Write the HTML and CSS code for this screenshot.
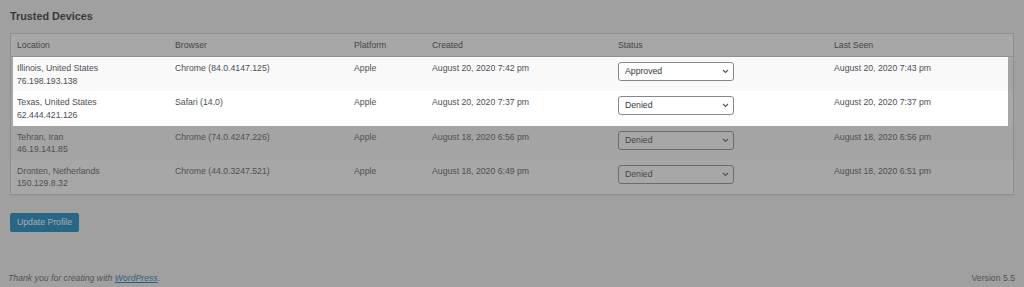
FILE: index.html
```html
<!DOCTYPE html>
<html lang="en">
<head>
    <meta charset="UTF-8">
    <meta name="viewport" content="width=device-width, initial-scale=1.0">
    <title>Profile - Trusted Devices</title>
    <link rel="stylesheet" href="styles.css">
</head>
<body>
    <div class="wrap">
        <h2 class="section-title">Trusted Devices</h2>

        <div class="devices">
            <div class="devices-row devices-head">
                <div>Location</div>
                <div>Browser</div>
                <div>Platform</div>
                <div>Created</div>
                <div>Status</div>
                <div>Last Seen</div>
            </div>

            <!-- rows picked out by the tour -->
            <div class="devices-focus">
                <div class="devices-row alt">
                    <div>Illinois, United States<br>76.198.193.138</div>
                    <div>Chrome (84.0.4147.125)</div>
                    <div>Apple</div>
                    <div>August 20, 2020 7:42 pm</div>
                    <div>
                        <span class="select-wrap">
                            <select>
                                <option selected>Approved</option>
                                <option>Denied</option>
                            </select>
                            <svg class="chevron" width="7" height="5" viewBox="0 0 7 5"><path d="M1 1l2.5 2.5L6 1" fill="none" stroke="#555" stroke-width="1.1"/></svg>
                        </span>
                    </div>
                    <div>August 20, 2020 7:43 pm</div>
                </div>
                <div class="devices-row">
                    <div>Texas, United States<br>62.444.421.126</div>
                    <div>Safari (14.0)</div>
                    <div>Apple</div>
                    <div>August 20, 2020 7:37 pm</div>
                    <div>
                        <span class="select-wrap">
                            <select>
                                <option>Approved</option>
                                <option selected>Denied</option>
                            </select>
                            <svg class="chevron" width="7" height="5" viewBox="0 0 7 5"><path d="M1 1l2.5 2.5L6 1" fill="none" stroke="#555" stroke-width="1.1"/></svg>
                        </span>
                    </div>
                    <div>August 20, 2020 7:37 pm</div>
                </div>
            </div>

            <div class="devices-row alt">
                <div>Tehran, Iran<br>46.19.141.85</div>
                <div>Chrome (74.0.4247.226)</div>
                <div>Apple</div>
                <div>August 18, 2020 6:56 pm</div>
                <div>
                    <span class="select-wrap">
                        <select>
                            <option>Approved</option>
                            <option selected>Denied</option>
                        </select>
                        <svg class="chevron" width="7" height="5" viewBox="0 0 7 5"><path d="M1 1l2.5 2.5L6 1" fill="none" stroke="#555" stroke-width="1.1"/></svg>
                    </span>
                </div>
                <div>August 18, 2020 6:56 pm</div>
            </div>
            <div class="devices-row">
                <div>Dronten, Netherlands<br>150.129.8.32</div>
                <div>Chrome (44.0.3247.521)</div>
                <div>Apple</div>
                <div>August 18, 2020 6:49 pm</div>
                <div>
                    <span class="select-wrap">
                        <select>
                            <option>Approved</option>
                            <option selected>Denied</option>
                        </select>
                        <svg class="chevron" width="7" height="5" viewBox="0 0 7 5"><path d="M1 1l2.5 2.5L6 1" fill="none" stroke="#555" stroke-width="1.1"/></svg>
                    </span>
                </div>
                <div>August 18, 2020 6:51 pm</div>
            </div>
        </div>

        <p class="submit">
            <button class="button-primary">Update Profile</button>
        </p>
    </div>

    <footer class="footer">
        <p class="thanks">Thank you for creating with <a href="#">WordPress</a>.</p>
        <p class="version">Version 5.5</p>
    </footer>
</body>
</html>
```

FILE: styles.css
```css
body {
    margin: 0;
    min-height: 100vh;
    background: #f1f1f1;
    color: #444;
    font-family: 'Liberation Sans', Arial, sans-serif;
    font-size: 8.7px;
}

.wrap {
    padding: 0 10px;
}

.section-title {
    margin: 9px 0 10px;
    font-size: 10.8px;
    line-height: 14px;
    font-weight: bold;
    color: #1d2327;
}

.devices {
    background: #fff;
    border: 1px solid #ccd0d4;
    box-shadow: 0 1px 1px rgba(0, 0, 0, 0.04);
}

.devices-row {
    display: grid;
    grid-template-columns: 158px 179px 78px 186px 216px 1fr;
    background: #fff;
    color: #4a4f55;
}

.devices-row > div {
    padding: 5px 6px 4.3px;
    line-height: 12.5px;
}

.devices-row.alt {
    background: #f9f9f9;
}

.devices-head {
    border-bottom: 1px solid #ccd0d4;
    color: #32373c;
}

.devices-head > div {
    padding: 5px 6px;
    line-height: 12px;
}

/* spotlight: everything outside this box gets dimmed */
.devices-focus {
    position: relative;
}

.devices-focus::after {
    content: "";
    position: absolute;
    top: 0;
    bottom: 0;
    left: 2px;
    right: 5px;
    box-shadow: 0 0 0 3000px rgba(80, 80, 80, 0.5);
    pointer-events: none;
    z-index: 5;
}

.select-wrap {
    position: relative;
    display: inline-block;
}

.select-wrap select {
    appearance: none;
    -webkit-appearance: none;
    display: block;
    width: 116px;
    height: 19px;
    margin: 0;
    padding: 0 16px 0 6px;
    border: 1px solid #7e8993;
    border-radius: 3px;
    background: #fff;
    color: #32373c;
    font-family: inherit;
    font-size: 8.7px;
    line-height: 17px;
}

.chevron {
    position: absolute;
    right: 5px;
    top: 7px;
}

.submit {
    margin: 18px 0 0;
}

.button-primary {
    display: block;
    height: 19px;
    padding: 0 6px;
    border: 1px solid #007cba;
    border-radius: 2px;
    background: #007cba;
    color: #fff;
    font-family: inherit;
    font-size: 8.7px;
    line-height: 17px;
    cursor: pointer;
}

.footer {
    display: flex;
    justify-content: space-between;
    margin-top: 40px;
    padding: 0 9px 0 8px;
    color: #50575e;
    line-height: 13px;
}

.footer p {
    margin: 0;
}

.thanks {
    font-style: italic;
}

.thanks a {
    color: #0073aa;
}
```
